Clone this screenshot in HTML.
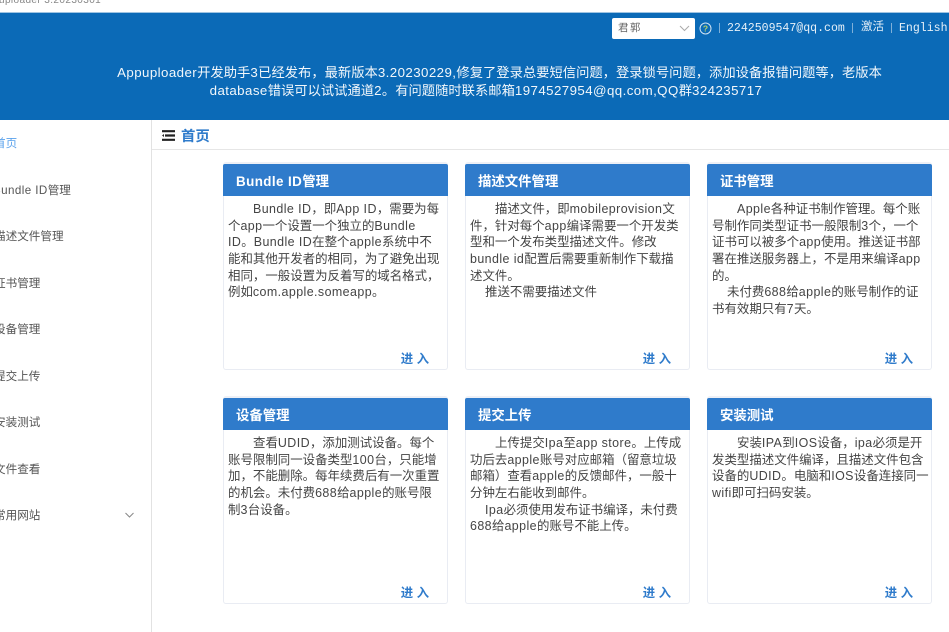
<!DOCTYPE html>
<html><head><meta charset="utf-8">
<style>
html,body{margin:0;padding:0;width:949px;height:632px;overflow:hidden;background:#fff;font-family:"Liberation Sans","Noto Sans CJK SC",sans-serif;}
i{font-style:normal;letter-spacing:.42px}
.a{position:absolute;white-space:nowrap}
.card{position:absolute;width:225px;height:206px;box-sizing:border-box;background:#fff;border:1px solid #e9ecf3;border-top:0;border-radius:3px;}
.card:before{content:"";position:absolute;left:-1px;right:-1px;top:-2px;height:3px;background:#eef0f6;border-radius:3px 3px 0 0}
.hd{position:absolute;left:-1px;top:0;right:-1px;height:32px;background:#2f7bcb;color:#fff;font-weight:bold;font-size:13.4px;line-height:36px;padding-left:13px;border-radius:2px 2px 0 0}
.l{position:absolute;left:4px;margin-top:1px;white-space:nowrap;font-size:12.45px;line-height:17px;color:#444}
.go{position:absolute;right:18px;bottom:2px;color:#2f7bcb;font-weight:bold;font-size:12.4px;line-height:16px}
.m{position:absolute;white-space:nowrap;font-size:11.6px;line-height:16px;color:#555}
</style></head><body>
<div class="a" style="left:-20px;top:-5px;font-size:10px;line-height:12px;color:#888;letter-spacing:.4px">Appuploader 3.20230301</div>
<div class="a" style="left:0;top:12px;width:949px;height:108px;background:#0b6ab7;border-top:1px solid #9fc4e2;box-sizing:border-box"></div>

<div class="a" style="left:612px;top:18px;width:83px;height:21px;background:#fff;border-radius:2px"></div>
<div class="a" style="left:618px;top:21px;font-size:10.5px;line-height:14px;color:#666;letter-spacing:1.4px">君郭</div>
<svg class="a" style="left:679px;top:25px" width="11" height="7" viewBox="0 0 11 7"><path d="M1 1l4.5 4.5L10 1" fill="none" stroke="#aaa" stroke-width="1"/></svg>
<svg class="a" style="left:699px;top:22px" width="13" height="13" viewBox="0 0 13 13"><circle cx="6.5" cy="6.5" r="5.5" fill="none" stroke="#cfe2f2" stroke-width="1"/><text x="6.5" y="9.5" font-size="8.5" font-weight="bold" text-anchor="middle" fill="#b6d36a" font-family="Liberation Sans">?</text></svg>
<div class="a" style="left:719px;top:23px;width:1px;height:10px;background:#7fb0d8"></div>
<div class="a" style="left:727px;top:22px;font-family:'Liberation Mono',monospace;font-size:11.55px;line-height:14px;color:#e6f0f8">2242509547@qq.com</div>
<div class="a" style="left:852px;top:23px;width:1px;height:10px;background:#7fb0d8"></div>
<div class="a" style="left:861px;top:20px;font-size:11.5px;line-height:15px;color:#e6f0f8">激活</div>
<div class="a" style="left:891px;top:23px;width:1px;height:10px;background:#7fb0d8"></div>
<div class="a" style="left:899px;top:22px;font-family:'Liberation Mono',monospace;font-size:11.55px;line-height:14px;color:#e6f0f8">English</div>

<div class="a" style="left:0;top:64px;width:999px;text-align:center;font-size:13.3px;line-height:17px;color:#f2f7fb"><i>Appuploader</i>开发助手<i>3</i>已经发布，最新版本<i>3.20230229,</i>修复了登录总要短信问题，登录锁号问题，添加设备报错问题等，老版本</div>
<div class="a" style="left:0;top:82px;width:972px;text-align:center;font-size:13.3px;line-height:17px;color:#f2f7fb"><i>database</i>错误可以试试通道<i>2</i>。有问题随时联系邮箱<i>1974527954@qq.com,QQ</i>群<i>324235717</i></div>

<div class="a" style="left:151px;top:120px;width:1px;height:512px;background:#e2e2e2"></div>
<div class="a" style="left:152px;top:149px;width:797px;height:1px;background:#e6e6e6"></div>
<svg class="a" style="left:162px;top:130px" width="13" height="11" viewBox="0 0 13 11"><path d="M0 1.2h13M3 5.5h10M0 9.8h13" stroke="#222" stroke-width="2.2"/><path d="M0 5.5l2-1.5v3z" fill="#222"/></svg>
<div class="a" style="left:181px;top:128px;font-size:14.4px;line-height:18px;font-weight:bold;color:#2f7bcb">首页</div>

<div class="m" style="left:-6px;top:136px;color:#5aa2ec">首页</div>
<div class="m" style="left:-7px;top:183px;"><i>Bundle ID</i>管理</div>
<div class="m" style="left:-6px;top:229px">描述文件管理</div>
<div class="m" style="left:-6px;top:276px">证书管理</div>
<div class="m" style="left:-6px;top:322px">设备管理</div>
<div class="m" style="left:-6px;top:369px">提交上传</div>
<div class="m" style="left:-6px;top:415px">安装测试</div>
<div class="m" style="left:-6px;top:462px">文件查看</div>
<div class="m" style="left:-6px;top:508px">常用网站</div>
<svg class="a" style="left:125px;top:512px" width="9" height="6" viewBox="0 0 9 6"><path d="M.5 1l4 4 4-4" fill="none" stroke="#888" stroke-width="1"/></svg>

<div class="card" style="left:223px;top:164px"><div class="hd"><i>Bundle ID</i>管理</div>
<div class="l" style="top:36px;left:29px"><i>Bundle ID</i>，即<i>App ID</i>，需要为每</div>
<div class="l" style="top:53px">个<i>app</i>一个设置一个独立的<i>Bundle</i></div>
<div class="l" style="top:69px"><i>ID</i>。<i>Bundle ID</i>在整个<i>apple</i>系统中不</div>
<div class="l" style="top:86px">能和其他开发者的相同，为了避免出现</div>
<div class="l" style="top:103px">相同，一般设置为反着写的域名格式，</div>
<div class="l" style="top:119px">例如<i>com.apple.someapp</i>。</div>
<div class="go">进 入</div></div>

<div class="card" style="left:465px;top:164px"><div class="hd">描述文件管理</div>
<div class="l" style="top:36px;left:29px">描述文件，即<i>mobileprovision</i>文</div>
<div class="l" style="top:53px">件，针对每个<i>app</i>编译需要一个开发类</div>
<div class="l" style="top:69px">型和一个发布类型描述文件。修改</div>
<div class="l" style="top:86px"><i>bundle id</i>配置后需要重新制作下载描</div>
<div class="l" style="top:103px">述文件。</div>
<div class="l" style="top:119px;left:19px">推送不需要描述文件</div>
<div class="go">进 入</div></div>

<div class="card" style="left:707px;top:164px"><div class="hd">证书管理</div>
<div class="l" style="top:36px;left:29px"><i>Apple</i>各种证书制作管理。每个账</div>
<div class="l" style="top:53px">号制作同类型证书一般限制<i>3</i>个，一个</div>
<div class="l" style="top:69px">证书可以被多个<i>app</i>使用。推送证书部</div>
<div class="l" style="top:86px">署在推送服务器上，不是用来编译<i>app</i></div>
<div class="l" style="top:103px">的。</div>
<div class="l" style="top:119px;left:19px">未付费<i>688</i>给<i>apple</i>的账号制作的证</div>
<div class="l" style="top:136px">书有效期只有<i>7</i>天。</div>
<div class="go">进 入</div></div>

<div class="card" style="left:223px;top:398px"><div class="hd">设备管理</div>
<div class="l" style="top:36px;left:29px">查看<i>UDID</i>，添加测试设备。每个</div>
<div class="l" style="top:53px">账号限制同一设备类型<i>100</i>台，只能增</div>
<div class="l" style="top:69px">加，不能删除。每年续费后有一次重置</div>
<div class="l" style="top:86px">的机会。未付费<i>688</i>给<i>apple</i>的账号限</div>
<div class="l" style="top:103px">制<i>3</i>台设备。</div>
<div class="go">进 入</div></div>

<div class="card" style="left:465px;top:398px"><div class="hd">提交上传</div>
<div class="l" style="top:36px;left:29px">上传提交<i>Ipa</i>至<i>app store</i>。上传成</div>
<div class="l" style="top:53px">功后去<i>apple</i>账号对应邮箱（留意垃圾</div>
<div class="l" style="top:69px">邮箱）查看<i>apple</i>的反馈邮件，一般十</div>
<div class="l" style="top:86px">分钟左右能收到邮件。</div>
<div class="l" style="top:103px;left:19px"><i>Ipa</i>必须使用发布证书编译，未付费</div>
<div class="l" style="top:119px"><i>688</i>给<i>apple</i>的账号不能上传。</div>
<div class="go">进 入</div></div>

<div class="card" style="left:707px;top:398px"><div class="hd">安装测试</div>
<div class="l" style="top:36px;left:29px">安装<i>IPA</i>到<i>IOS</i>设备，<i>ipa</i>必须是开</div>
<div class="l" style="top:53px">发类型描述文件编译，且描述文件包含</div>
<div class="l" style="top:69px">设备的<i>UDID</i>。电脑和<i>IOS</i>设备连接同一</div>
<div class="l" style="top:86px"><i>wifi</i>即可扫码安装。</div>
<div class="go">进 入</div></div>
</body></html>
